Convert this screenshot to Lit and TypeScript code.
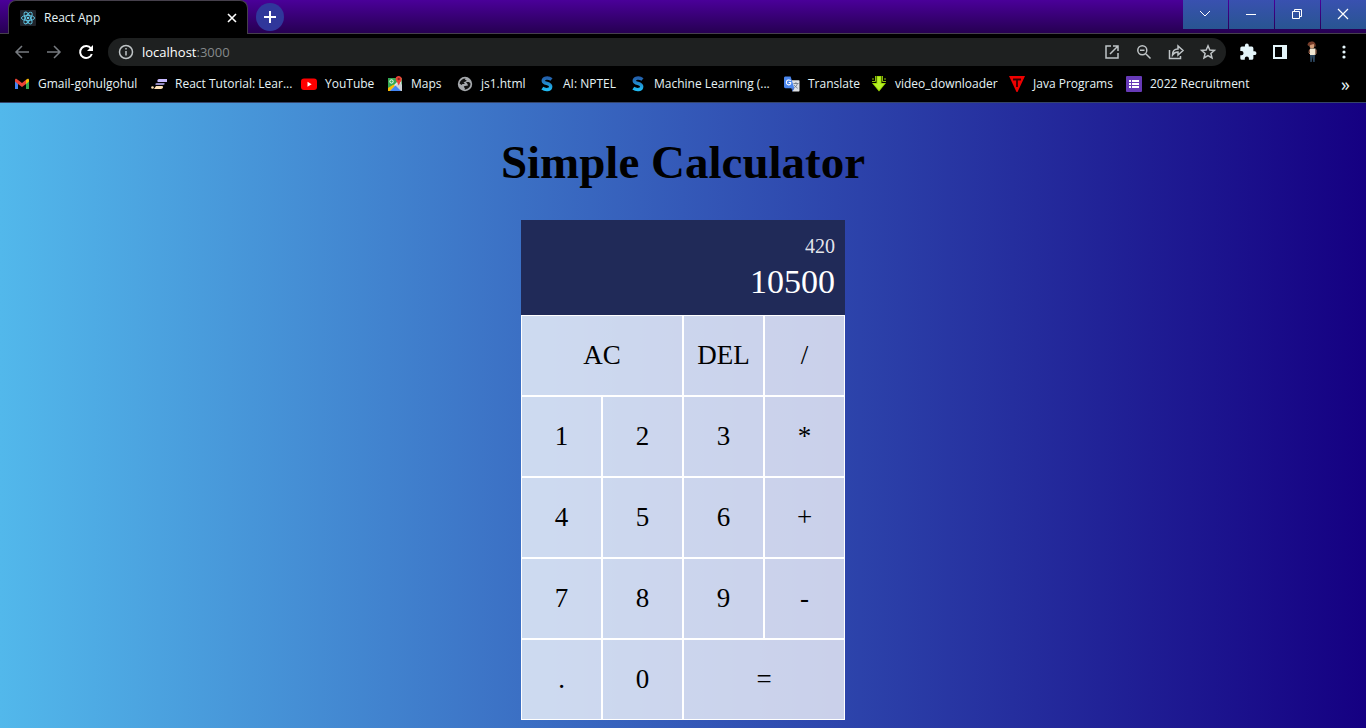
import { LitElement, html, css } from "lit";
import { customElement, state } from "lit/decorators.js";

const icons = {
  react: html`<svg width="16" height="16" viewBox="0 0 16 16"><rect width="16" height="16" rx="1" fill="#20242b"/><g fill="none" stroke="#61c9e8" stroke-width=".9"><ellipse cx="8" cy="8" rx="6.6" ry="2.6"/><ellipse cx="8" cy="8" rx="6.6" ry="2.6" transform="rotate(60 8 8)"/><ellipse cx="8" cy="8" rx="6.6" ry="2.6" transform="rotate(120 8 8)"/></g><circle cx="8" cy="8" r="1.3" fill="#61c9e8"/></svg>`,
  gmail: html`<svg width="16" height="16" viewBox="0 0 16 16"><path d="M1 4v9h3V7z" fill="#4285f4"/><path d="M15 4v9h-3V7z" fill="#34a853"/><path d="M12 3.800 13.300 3c.8-.5 1.700 0 1.700 1v1.500L12 8z" fill="#fbbc04"/><path d="M1 5.500V4c0-1 .9-1.500 1.700-1L8 7l4-3.200V8l-4 3-4-3z" fill="#ea4335"/></svg>`,
  tutorial: html`<svg width="16" height="16" viewBox="1 0 16 16"><path d="M9 3h8v3H8c-1 0-1-3 1-3z" fill="#c7b9ff"/><path d="M7 7h7c1 0 1 2-1 2H6c-1 0-1-2 1-2z" fill="#938ac2"/><path d="M6 10h6c2 0 1 3-1 3H4z" fill="#ffe2b8"/><circle cx="2.500" cy="11.500" r="1.300" fill="#ffe2b8"/></svg>`,
  youtube: html`<svg width="16" height="16" viewBox="0 0 16 16"><rect x="0" y="2.500" width="16" height="11.500" rx="3" fill="#f00"/><path d="M6.500 5.800v4.900l4.200-2.500z" fill="#fff"/></svg>`,
  maps: html`<svg width="16" height="16" viewBox="0 0 16 16"><path d="M1 2h14v13H1z" fill="#34a853"/><path d="M1 15 14 2l1 13z" fill="#e8eaed"/><path d="m3 15 5-5 5 5z" fill="#4285f4"/><path d="M1 12v3h2l5-5-1.500-1.500z" fill="#fbbc04"/><path d="m8 10 5 5h2V9l-3-3z" fill="#ccd1d5"/><path d="m3 15 5.500-5.500L14 15z" fill="#4285f4"/><circle cx="4.500" cy="5.500" r="1.700" fill="none" stroke="#fff"/><path d="M11.700 0C8 0 8 4 10 6l1.700 3.500L13.400 6c2.600-2 1.400-6-1.700-6z" fill="#ea4335"/><circle cx="11.700" cy="3" r="1.200" fill="#8e201b"/></svg>`,
  globe: html`<svg width="16" height="16" viewBox="0 0 16 16"><circle cx="8" cy="8" r="7.200" fill="#a5a8ac"/><path d="M2.500 7.500C3 4.500 5.500 2.500 8.500 2.500L8 4c2-.5 2 1 .5 1.500L6.500 6.500 8 8H5.500L4.500 9z" fill="#111"/><path d="M9 6h3l1.500 1.500C13.500 11 11 13.500 7.500 13.500L8 12c-1.500-.5-1.500-2 0-2l3-.5-.5-1.500z" fill="#111"/></svg>`,
  nptel: html`<svg width="16" height="16" viewBox="0 0 16 16"><defs><linearGradient id="g" x2="0" y2="1"><stop stop-color="#2461ad"/><stop offset="1" stop-color="#20baf2"/></linearGradient></defs><path d="M12.500 3.500C9 .8 4 2 4.300 5c.3 3 7.400 2 7.400 5.500 0 3.500-5 4-8.400 1.700" fill="none" stroke="url(#g)" stroke-width="3.400"/></svg>`,
  translate: html`<svg width="16" height="16" viewBox="0 0 17 16"><path d="M6 4h9.500c.8 0 1 .5 1 1v10c0 .7-.5 1-1 1H9z" fill="#dfe2e6"/><path d="M1.500 0H7l4 12.500H1.500c-.8 0-1.500-.6-1.500-1.500V1.500C0 .6.700 0 1.500 0z" fill="#4b87ee"/><path d="M7.200 4.500C5.500 2.900 2.500 3.700 2.500 6.300s3.500 3.500 4.600 1.500V6.500H5" fill="none" stroke="#fff" stroke-width="1.100"/><path d="M10 7.500h5.500M12.700 6v1.500m1.500 0c-.3 2-1.700 3.500-3.300 4.500m0-3c.7 1.500 2.300 3 3.700 3.500" fill="none" stroke="#697684" stroke-width=".9"/><path d="M8 12.500h3L9 16z" fill="#315cbb"/></svg>`,
  download: html`<svg width="16" height="16" viewBox="0 0 16 16"><path d="M5.500 0h5v7H15l-7 8.500L1 7h4.500z" fill="#9edb00"/><path d="M6.500 1h3v7H13l-5 6-5-6h3.500z" fill="#b5ee2a"/><path d="M4.500 0v5.500H1M11.500 0v5.500H15M2 2v2M14 2v2" fill="none" stroke="#8cbf08"/></svg>`,
  java: html`<svg width="16" height="16" viewBox="0 0 16 16"><path d="M0 0h16L8.500 16h-1z" fill="#f00000"/><path d="M4 3.500h8M8 3v8" stroke="#320000" stroke-width="1.800"/></svg>`,
  form: html`<svg width="16" height="16" viewBox="0 0 16 16"><rect width="16" height="16" rx="1" fill="#673ab7"/><path d="M3 4h2v2H3zm3 0h7v2H6zM3 7h2v2H3zm3 0h7v2H6zM3 10h2v2H3zm3 0h7v2H6z" fill="#fff"/></svg>`,
};

const line = (d: string) => html`<svg width="20" height="20" viewBox="0 0 20 20" fill="none" stroke="currentColor" stroke-width="1.500"><path d=${d}/></svg>`;

const bookmarks = [
  ["gmail", "Gmail-gohulgohul", 137], ["tutorial", "React Tutorial: Lear...", 150],
  ["youtube", "YouTube", 86], ["maps", "Maps", 70], ["globe", "js1.html", 82],
  ["nptel", "AI: NPTEL", 91], ["nptel", "Machine Learning (...", 154], ["translate", "Translate", 87],
  ["download", "video_downloader", 138], ["java", "Java Programs", 117], ["form", "2022 Recruitment", 130],
] as const;

@customElement("browser-chrome")
export class BrowserChrome extends LitElement {
  static styles = css`
    :host { display: block; font: 12px/16px "Open Sans", "Noto Sans", sans-serif; color: #e6f3f5; background: #000; }
    * { box-sizing: border-box; }
    svg { display: block; flex: none; }
    button { display: grid; place-items: center; border: 0; padding: 0; margin: 0; background: none; color: inherit; font: inherit; }
    .tabs { display: flex; height: 34px; padding-left: 8px; background: linear-gradient(#4a0099, #260052); border-bottom: 1px solid #46404c; }
    .tab { display: flex; align-items: center; width: 240px; height: 34px; padding: 0 8px 0 11px; background: #000; border: 1px solid #46404c; border-bottom: 0; border-radius: 8px 8px 0 0; }
    .name { flex: 1; padding-left: 8px; }
    .add { width: 28px; height: 28px; margin: 3px 8px; border-radius: 50%; background: #30379b; color: #fff; }
    .windows { display: flex; gap: 1px; margin-left: auto; }
    .windows button { width: 45px; height: 29px; background: linear-gradient(#3951b0, #285591); color: #fff; }
    .toolbar { display: flex; align-items: center; height: 36px; padding: 0 12px; }
    .nav { width: 20px; margin-right: 12px; color: #777b80; }
    .reload { color: #fff; }
    .address { display: flex; flex: 1; align-items: center; height: 28px; padding: 0 8px; border-radius: 14px; background: #1e2020; color: #bfc4c6; }
    .site { display: flex; flex: 1; padding-left: 6px; font-size: 13px; color: #85898b; }
    .host { color: #fff; }
    .tools { display: flex; gap: 12px; }
    .extras { display: flex; gap: 12px; margin-left: 12px; }
    .bookmarks { display: flex; align-items: center; height: 33px; padding: 0 16px 0 14px; border-bottom: 1px solid #354468; }
    .bookmark { display: flex; flex: 0 0 auto; align-items: center; gap: 8px; padding-bottom: 4px; color: inherit; text-decoration: none; white-space: nowrap; }
    .more { margin-left: auto; padding-bottom: 4px; font-size: 18px; }
  `;

  render() {
    return html`
      <div class="tabs">
        <div class="tab">${icons.react}<span class="name">React App</span><button aria-label="Close tab"><svg width="14" height="14" viewBox="0 0 14 14"><path d="m3 3 8 8m0-8-8 8" stroke="#fff" stroke-width="1.600"/></svg></button></div>
        <button class="add" aria-label="New tab"><svg width="16" height="16" viewBox="0 0 16 16"><path d="M8 2v12M2 8h12" stroke="#fff" stroke-width="2"/></svg></button>
        <div class="windows">
          <button aria-label="Search tabs"><svg width="13" height="13" viewBox="0 0 13 13"><path d="m1 3 5 5 5-5" fill="none" stroke="#fff"/></svg></button>
          <button aria-label="Minimize"><svg width="13" height="13" viewBox="0 0 13 13"><path d="M1 6.500h10" stroke="#fff"/></svg></button>
          <button aria-label="Restore"><svg width="13" height="13" viewBox="0 0 13 13"><path d="M1.500 3.500h7v7h-7zM3.500 3.500v-2h7v7h-2" fill="none" stroke="#fff"/></svg></button>
          <button aria-label="Close"><svg width="13" height="13" viewBox="0 0 13 13"><path d="m1 1 10 10M11 1 1 11" stroke="#fff" stroke-width="1.200"/></svg></button>
        </div>
      </div>
      <div class="toolbar">
        <button class="nav" aria-label="Back">${line("M17 10H4m6-6-6 6 6 6")}</button>
        <button class="nav" aria-label="Forward">${line("M3 10h13m-6-6 6 6-6 6")}</button>
        <button class="nav reload" aria-label="Reload"><svg width="20" height="20" viewBox="0 0 20 20"><path d="M15 6.500A6 6 0 1 0 15.800 12" fill="none" stroke="currentColor" stroke-width="2"/><path d="M17 3v6h-6z" fill="currentColor"/></svg></button>
        <div class="address">${line("M16.500 10a6.500 6.500 0 1 1-13 0 6.500 6.500 0 0 1 13 0zM10 9v4.500M10 6v1.500")}<div class="site"><span class="host">localhost</span>:3000</div>
          <div class="tools">
            <button aria-label="Open">${line("M9 4H4v12h12v-5M11 4h5v5M16 4l-8 8")}</button>
            <button aria-label="Zoom">${line("M12.800 8.300a4.500 4.500 0 1 1-9 0 4.500 4.500 0 0 1 9 0zM11.500 11.500l5 5M6 8.300h4.500")}</button>
            <button aria-label="Share">${line("M3.500 8v8.500h11V14M6.500 13c0-4 2.500-6 5.500-6V4l5 4.500-5 4.500v-3c-2.500 0-4 .8-5.500 3z")}</button>
            <button aria-label="Bookmark">${line("m10 3.800 1.800 4.200 4.600.4-3.500 3 1.100 4.500-4-2.400-4 2.400 1.100-4.500-3.500-3 4.600-.4z")}</button>
          </div>
        </div>
        <div class="extras">
          <button aria-label="Extensions"><svg width="20" height="20" viewBox="-1 0 26 26" fill="#e4f5fa"><path d="M20.500 12H19V8a2 2 0 0 0-2-2h-4V4.500a2.500 2.500 0 0 0-5 0V6H4a2 2 0 0 0-2 2v3.800h1.500a2.700 2.700 0 0 1 0 5.400H2V21a2 2 0 0 0 2 2h3.800v-1.500a2.700 2.700 0 0 1 5.400 0V23H17a2 2 0 0 0 2-2v-4h1.500a2.500 2.500 0 0 0 0-5z"/></svg></button>
          <button aria-label="Side panel"><svg width="20" height="20" viewBox="0 0 20 20"><path fill="#e4f5fa" fill-rule="evenodd" d="M3 3h14v14H3zm2 2v10h7V5z"/></svg></button>
          <button aria-label="Profile"><svg width="20" height="22" viewBox="0 0 20 22"><path d="M8 13h5l-.3 8h-1.500l-.7-6-.7 6H8.300z" fill="#2c465f"/><path d="M8 7.500h5.500V14H8z" fill="#f0e6d2"/><path d="M7.500 8.500 7 12l1 1M14 8.500v4l-1 1" fill="none" stroke="#b97c60"/><ellipse cx="10" cy="4.500" rx="2.500" ry="3" fill="#d39b77"/><path d="M5.500 4C6 1 8 .5 10 .5s4.500 2 3.500 5.500L11.500 3l-3 1-2 1z" fill="#783e2b"/></svg></button>
          <button aria-label="Menu"><svg width="20" height="20" viewBox="0 0 20 20" fill="#e4f5fa"><circle cx="10" cy="5" r="1.600"/><circle cx="10" cy="10" r="1.600"/><circle cx="10" cy="15" r="1.600"/></svg></button>
        </div>
      </div>
      <nav class="bookmarks" aria-label="Bookmarks">
        ${bookmarks.map(([icon, label, width]) => html`<a class="bookmark" href="#" style="width:${width}px">${icons[icon]}<span>${label}</span></a>`)}
        <button class="more" aria-label="More bookmarks">»</button>
      </nav>`;
  }
}

@customElement("app-root")
export class AppRoot extends LitElement {
  @state() private previous = "420";
  @state() private current = "10500";

  static styles = css`
    :host { display: flex; flex-direction: column; min-height: 100vh; font-family: "Liberation Serif", serif; }
    * { box-sizing: border-box; }
    .page { flex: 1; padding: 32px 0 8px; background: linear-gradient(to right, #52b8eb, #3459b8 50%, #150082); }
    h1 { margin: 0 0 31px; text-align: center; font-size: 47px; line-height: 54px; font-weight: 700; color: #000; }
    .calculator { display: grid; grid-template-columns: repeat(4, 81px); grid-template-rows: 95px repeat(5, 81px); justify-content: center; }
    .display { grid-column: 1 / -1; display: flex; flex-direction: column; justify-content: center; align-items: flex-end; padding: 0 10px 2px; background: #202a58; color: #fff; }
    .previous { font-size: 20px; line-height: 30px; color: rgba(255, 255, 255, .9); }
    .current { font-size: 34px; line-height: 42px; }
    .key { border: 1px solid #fff; border-radius: 0; padding: 0 0 2px; background: rgba(255, 255, 255, .75); color: #000; font: 27px/32px "Liberation Serif", serif; }
    .wide { grid-column: span 2; }
  `;

  private press(key: string) {
    if (key === "AC") { this.current = ""; this.previous = ""; }
    else if (key === "DEL") this.current = this.current.slice(0, -1);
    else if (/[\d.]/.test(key)) this.current += key;
  }

  render() {
    const keys = ["AC", "DEL", "/", "1", "2", "3", "*", "4", "5", "6", "+", "7", "8", "9", "-", ".", "0", "="];
    return html`
      <browser-chrome></browser-chrome>
      <main class="page">
        <h1>Simple Calculator</h1>
        <div class="calculator">
          <div class="display"><div class="previous">${this.previous}</div><div class="current">${this.current}</div></div>
          ${keys.map((key) => html`<button class="key ${key === "AC" || key === "=" ? "wide" : ""}" @click=${() => this.press(key)}>${key}</button>`)}
        </div>
      </main>`;
  }
}
